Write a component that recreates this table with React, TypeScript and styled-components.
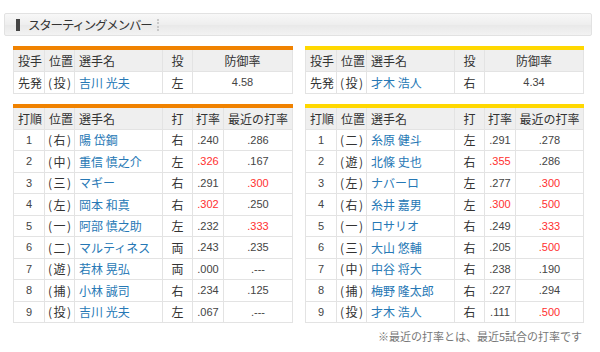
import styled, { createGlobalStyle } from 'styled-components'

const GlobalStyle = createGlobalStyle`
  body {
    margin: 0;
    background: #fff;
    font-family: "Noto Sans CJK JP", "Noto Sans", sans-serif;
    color: #333;
  }
`

const Page = styled.div`
  width: 600px;
  height: 352px;
  padding-top: 13px;
  box-sizing: border-box;
`

const TitleBar = styled.div`
  margin-left: 4px;
  width: 588px;
  height: 23px;
  box-sizing: border-box;
  border: 1px solid #e2e2e2;
  border-radius: 2px;
  background: linear-gradient(#f8f8f8, #eeeeee 50%, #e8e8e8 51%, #f3f3f3);
  display: flex;
  align-items: center;
  padding-left: 11px;
`

const TitleMark = styled.span`
  width: 4px;
  height: 12px;
  background: #444;
  margin-right: 8px;
`

const TitleText = styled.span`
  font-size: 12.5px;
  letter-spacing: -1.2px;
  color: #333;
`

const TitleDots = styled.span`
  width: 0;
  height: 12px;
  border-left: 2px dotted #c8c8c8;
  margin-left: 5px;
`

const Columns = styled.div`
  display: flex;
  gap: 13px;
  margin: 10px 0 0 13px;
`

const Side = styled.div<{ $w: number }>`
  width: ${p => p.$w}px;
  display: flex;
  flex-direction: column;
  gap: 10px;
`

const Table = styled.table<{ $bar: string }>`
  width: 100%;
  border-collapse: collapse;
  table-layout: fixed;
  border-top: 4px solid ${p => p.$bar};
  font-size: 12px;
  td, th {
    border: 1px solid #e3e3e3;
    padding: 0 0 0 4px;
    white-space: nowrap;
    overflow: hidden;
  }
  th {
    background: #efefef;
    font-weight: normal;
    text-align: left;
    height: 21px;
    color: #333;
  }
  td {
    height: 20.5px;
  }
`

const Center = styled.td`
  && { text-align: center; padding: 0; }
`

const HeadCenter = styled.th`
  && { text-align: center; padding: 0; }
`

const Num = styled.td<{ $hot?: boolean }>`
  && {
    text-align: center;
    padding: 0;
    font-family: "Liberation Sans", Arial, sans-serif;
    font-size: 11px;
    color: ${p => (p.$hot ? '#ff3030' : '#444')};
  }
`

const Pos = styled.td`
  && { padding-left: 3px; letter-spacing: 1.5px; }
`

const Name = styled.td`
  && { color: #2678b5; }
`

const Note = styled.div`
  text-align: right;
  font-size: 11px;
  color: #777;
  margin-top: -5px;
  padding-right: 1px;
`

type Batter = [string, string, string, string, string]

const hot = (v: string) => v !== '.---' && parseFloat(v) >= 0.3

const leftLineup: Batter[] = [
  ['右', '陽 岱鋼', '右', '.240', '.286'],
  ['中', '重信 慎之介', '左', '.326', '.167'],
  ['三', 'マギー', '右', '.291', '.300'],
  ['左', '岡本 和真', '右', '.302', '.250'],
  ['一', '阿部 慎之助', '左', '.232', '.333'],
  ['二', 'マルティネス', '両', '.243', '.235'],
  ['遊', '若林 晃弘', '両', '.000', '.---'],
  ['捕', '小林 誠司', '右', '.234', '.125'],
  ['投', '吉川 光夫', '左', '.067', '.---'],
]

const rightLineup: Batter[] = [
  ['二', '糸原 健斗', '左', '.291', '.278'],
  ['遊', '北條 史也', '右', '.355', '.286'],
  ['左', 'ナバーロ', '左', '.277', '.300'],
  ['右', '糸井 嘉男', '左', '.300', '.500'],
  ['一', 'ロサリオ', '右', '.249', '.333'],
  ['三', '大山 悠輔', '右', '.205', '.500'],
  ['中', '中谷 将大', '右', '.238', '.190'],
  ['捕', '梅野 隆太郎', '右', '.227', '.294'],
  ['投', '才木 浩人', '右', '.111', '.500'],
]

function Pitcher({ bar, name, hand, era, last }: { bar: string; name: string; hand: string; era: string; last: number }) {
  return (
    <Table $bar={bar}>
      <colgroup>
        <col style={{ width: 31 }} />
        <col style={{ width: 30 }} />
        <col style={{ width: 88 }} />
        <col style={{ width: 30 }} />
        <col style={{ width: last }} />
      </colgroup>
      <thead>
        <tr>
          <th>投手</th>
          <th>位置</th>
          <th>選手名</th>
          <HeadCenter>投</HeadCenter>
          <HeadCenter>防御率</HeadCenter>
        </tr>
      </thead>
      <tbody>
        <tr>
          <td>先発</td>
          <Pos>(投)</Pos>
          <Name>{name}</Name>
          <Center>{hand}</Center>
          <Num>{era}</Num>
        </tr>
      </tbody>
    </Table>
  )
}

function Lineup({ bar, rows, last }: { bar: string; rows: Batter[]; last: number }) {
  return (
    <Table $bar={bar}>
      <colgroup>
        <col style={{ width: 31 }} />
        <col style={{ width: 30 }} />
        <col style={{ width: 88 }} />
        <col style={{ width: 30 }} />
        <col style={{ width: 31 }} />
        <col style={{ width: last }} />
      </colgroup>
      <thead>
        <tr>
          <th>打順</th>
          <th>位置</th>
          <th>選手名</th>
          <HeadCenter>打</HeadCenter>
          <HeadCenter>打率</HeadCenter>
          <HeadCenter>最近の打率</HeadCenter>
        </tr>
      </thead>
      <tbody>
        {rows.map((r, i) => (
          <tr key={i}>
            <Num>{i + 1}</Num>
            <Pos>({r[0]})</Pos>
            <Name>{r[1]}</Name>
            <Center>{r[2]}</Center>
            <Num $hot={hot(r[3])}>{r[3]}</Num>
            <Num $hot={hot(r[4])}>{r[4]}</Num>
          </tr>
        ))}
      </tbody>
    </Table>
  )
}

export default function App() {
  return (
    <Page>
      <GlobalStyle />
      <TitleBar>
        <TitleMark />
        <TitleText>スターティングメンバー</TitleText>
        <TitleDots />
      </TitleBar>
      <Columns>
        <Side $w={279}>
          <Pitcher bar="#f08200" name="吉川 光夫" hand="左" era="4.58" last={100} />
          <Lineup bar="#f08200" rows={leftLineup} last={69} />
        </Side>
        <Side $w={278}>
          <Pitcher bar="#ffd800" name="才木 浩人" hand="右" era="4.34" last={99} />
          <Lineup bar="#ffd800" rows={rightLineup} last={68} />
          <Note>※最近の打率とは、最近5試合の打率です</Note>
        </Side>
      </Columns>
    </Page>
  )
}
